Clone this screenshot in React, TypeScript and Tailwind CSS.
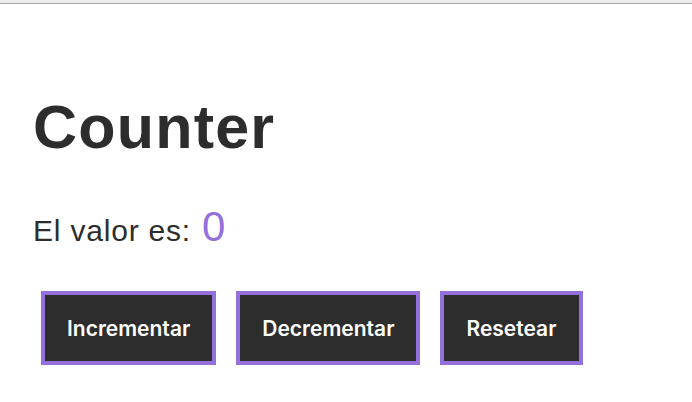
const Counter = () => {
  const value = 0;
  return (
    <div className="min-h-screen bg-white text-[#2d2d2d]" style={{ fontFamily: "'Liberation Sans', Arial, sans-serif" }}>
      <div className="h-[4px] bg-[#ececec] border-b border-[#a9a9a9]" />
      <div className="pl-[33px] flex flex-col">
        <h1 className="mt-[95px] text-[61px] leading-[57px] font-bold tracking-[1.2px]">Counter</h1>
        <div className="mt-[50px] flex items-baseline">
          <span className="text-[30px] leading-[29px] tracking-[0.8px]">El valor es:</span>
          <span className="ml-[11px] text-[42px] leading-[42px] text-[#9370db]">{value}</span>
        </div>
        <div className="mt-[43px] ml-[8px] flex gap-[20px]">
          {["Incrementar", "Decrementar", "Resetear"].map((label) => (
            <button
              key={label}
              className="bg-[#2d2d2d] border-4 border-[#9370db] px-[22px] py-[21.5px] text-white text-[21px] leading-[23px] font-semibold"
              style={{ fontFamily: "Inter, sans-serif" }}
            >
              {label}
            </button>
          ))}
        </div>
      </div>
    </div>
  );
};

export default function App() {
  return <Counter />;
}
